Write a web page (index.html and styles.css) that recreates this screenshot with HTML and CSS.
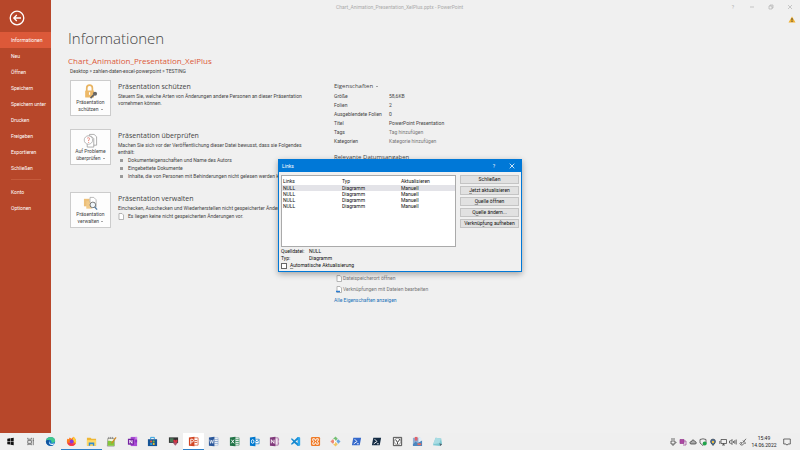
FILE: index.html
```html
<!DOCTYPE html>
<html lang="de">
<head>
<meta charset="utf-8">
<title>Chart_Animation_Presentation_XelPlus.pptx - PowerPoint</title>
<link rel="stylesheet" href="styles.css">
</head>
<body>
<div class="window">
  <nav class="sidebar">
    <button class="back" aria-label="Zurück"><svg viewBox="0 0 16 16"><circle cx="8" cy="8" r="6.8"/><path d="M12 8H5M7.8 5L4.8 8l3 3"/></svg></button>
    <a class="item active" href="#">Informationen</a>
    <a class="item" href="#">Neu</a>
    <a class="item" href="#">Öffnen</a>
    <a class="item" href="#">Speichern</a>
    <a class="item" href="#">Speichern unter</a>
    <a class="item" href="#">Drucken</a>
    <a class="item" href="#">Freigeben</a>
    <a class="item" href="#">Exportieren</a>
    <a class="item" href="#">Schließen</a>
    <hr class="divider">
    <a class="item" href="#">Konto</a>
    <a class="item" href="#">Optionen</a>
  </nav>
  <main class="backstage">
    <header class="titlebar">
      <span class="doc-title">Chart_Animation_Presentation_XelPlus.pptx - PowerPoint</span>
      <div class="window-buttons">
        <button aria-label="Hilfe">?</button>
        <button aria-label="Minimieren"><svg viewBox="0 0 6 6"><path d="M1 3h4"/></svg></button>
        <button aria-label="Verkleinern"><svg viewBox="0 0 6 6"><path d="M1 2h3v3H1zM2 2V1h3v3H4"/></svg></button>
        <button aria-label="Fenster schließen"><svg viewBox="0 0 6 6"><path d="M1 1l4 4M5 1L1 5"/></svg></button>
      </div>
    </header>
    <svg class="warning" viewBox="0 0 8 7"><path d="M4 .5L7.500 6.500H.5z" fill="#f0b030"/><path d="M4 2.200v2.300M4 5v.9" stroke="#333" stroke-width=".9"/></svg>
    <h1>Informationen</h1>
    <h2 class="file-name">Chart_Animation_Presentation_XelPlus</h2>
    <p class="path">Desktop » zahlen-daten-excel-powerpoint » TESTING</p>
    <div class="columns">
      <div class="actions">
        <section class="action">
          <button class="tile"><svg viewBox="0 0 16 16"><path d="M4 8V4.200a3 3 0 0 1 6 0V8" fill="none" stroke="#e8b462" stroke-width="1.800"/><rect x="2.300" y="6.800" width="9.400" height="7.700" rx=".6" fill="#edb968"/><path d="M7 8.800v2.700" stroke="#fff" stroke-width="1.300"/><path d="M8 15l3.500-3.500" stroke="#666" stroke-width="1.800"/><circle cx="12.800" cy="10.400" r="2.200" fill="#666"/></svg><span>Präsentation<br>schützen <i class="caret"></i></span></button>
          <div class="detail"><h3>Präsentation schützen</h3><p>Steuern Sie, welche Arten von Änderungen andere Personen an dieser Präsentation vornehmen können.</p></div>
        </section>
        <section class="action">
          <button class="tile"><svg viewBox="0 0 16 16"><path d="M7 3V1.500h4.800L14.500 4v9h-3M5 3.500h4l2.500 2.500v9H4.500v-4" fill="#fff" stroke="#888" stroke-width=".7"/><circle cx="5.800" cy="7.500" r="4.500" fill="#fff" stroke="#999" stroke-width=".7"/><path d="M4.500 5.500c3-1.500 3 1.500 1.500 2v1M6 9.500v1" fill="none" stroke="#e47c70"/></svg><span>Auf Probleme<br>überprüfen <i class="caret"></i></span></button>
          <div class="detail"><h3>Präsentation überprüfen</h3><p>Machen Sie sich vor der Veröffentlichung dieser Datei bewusst, dass sie Folgendes enthält:</p>
            <ul><li>Dokumenteigenschaften und Name des Autors</li><li>Eingebettete Dokumente</li><li>Inhalte, die von Personen mit Behinderungen nicht gelesen werden können</li></ul></div>
        </section>
        <section class="action">
          <button class="tile"><svg viewBox="0 0 16 16"><path d="M1 3h6v8H1z" fill="#edc07a"/><path d="M3.500 5.500h6v8h-6z" fill="#f1cb8b"/><path d="M7.500 7V1.500h4L14 4v8" fill="#fff" stroke="#999" stroke-width=".7"/><circle cx="10.500" cy="9.500" r="3" fill="#eef5fa" stroke="#666" stroke-width=".9"/><path d="M12.500 11.700l2.500 2.800" stroke="#557ea5" stroke-width="1.500"/></svg><span>Präsentation<br>verwalten <i class="caret"></i></span></button>
          <div class="detail"><h3>Präsentation verwalten</h3><p class="single">Einchecken, Auschecken und Wiederherstellen nicht gespeicherter Änderungen</p>
            <p class="none"><svg class="page" viewBox="0 0 6 7"><path d="M1 .5h3L5.500 2v4.500H1z"/></svg>Es liegen keine nicht gespeicherten Änderungen vor.</p></div>
        </section>
      </div>
      <aside class="properties">
        <h4>Eigenschaften <i class="caret"></i></h4>
        <dl>
          <dt>Größe</dt><dd>58,6KB</dd>
          <dt>Folien</dt><dd>2</dd>
          <dt>Ausgeblendete Folien</dt><dd>0</dd>
          <dt>Titel</dt><dd>PowerPoint Presentation</dd>
          <dt>Tags</dt><dd class="hint">Tag hinzufügen</dd>
          <dt>Kategorien</dt><dd class="hint">Kategorie hinzufügen</dd>
        </dl>
        <h4 class="dates">Relevante Datumsangaben</h4>
        <div class="file-links">
          <a href="#"><svg class="page" viewBox="0 0 6 7"><path d="M1 .5h3L5.500 2v4.500H1z"/></svg>Dateispeicherort öffnen</a>
          <a href="#"><svg class="page" viewBox="0 0 6 7"><path d="M1 .5h3L5.500 2v4.500H1z"/><path d="M0 5.500h4" stroke="#2b7cd3" stroke-width="1.500"/></svg>Verknüpfungen mit Dateien bearbeiten</a>
          <a class="all" href="#">Alle Eigenschaften anzeigen</a>
        </div>
      </aside>
    </div>
  </main>
  <div class="dialog" role="dialog" aria-label="Links">
    <header><span>Links</span><button aria-label="Dialoghilfe">?</button><button aria-label="Dialog schließen"><svg viewBox="0 0 6 6"><path d="M.7.7l4.600 4.600M5.300.7L.7 5.300"/></svg></button></header>
    <div class="dialog-body">
      <div class="list">
        <table>
          <thead><tr><th>Links</th><th>Typ</th><th>Aktualisieren</th></tr></thead>
          <tbody>
            <tr class="selected"><td>NULL</td><td>Diagramm</td><td>Manuell</td></tr>
            <tr><td>NULL</td><td>Diagramm</td><td>Manuell</td></tr>
            <tr><td>NULL</td><td>Diagramm</td><td>Manuell</td></tr>
            <tr><td>NULL</td><td>Diagramm</td><td>Manuell</td></tr>
          </tbody>
        </table>
      </div>
      <div class="commands">
        <button>Schließen</button>
        <button><u>J</u>etzt aktualisieren</button>
        <button><u>Q</u>uelle öffnen</button>
        <button>Q<u>u</u>elle ändern...</button>
        <button>Verknüp<u>f</u>ung aufheben</button>
      </div>
    </div>
    <dl class="source"><dt>Quelldatei:</dt><dd>NULL</dd><dt>Typ:</dt><dd>Diagramm</dd></dl>
    <label class="auto"><input type="checkbox"><span><u>A</u>utomatische Aktualisierung</span></label>
  </div>
</div>
<footer class="taskbar">
  <div class="apps">
    <button aria-label="Start"><svg viewBox="0 0 12 12"><path d="M2.500 3l3-.5v3.200h-3zM6 2.400L9.500 2v3.700H6zM2.500 6.200h3v3.200l-3-.5zM6 6.200h3.500V10L6 9.500z" fill="#111"/></svg></button>
    <button aria-label="Aufgabenansicht"><svg viewBox="0 0 12 12" fill="none" stroke="#555" stroke-width=".8"><path d="M3 2v1.500h4V2M3 5h4v3H3zM3 10V9h4v1M9 2v8M8.500 5h1"/></svg></button>
    <button aria-label="Edge"><svg viewBox="0 0 12 12"><circle cx="6" cy="6" r="5" fill="#1479cc"/><path d="M1 5.500C1.500 0 10.500-.3 11 5c.2 2.500-3.200 3-4.300 2 1-1.700-.4-3-2-3C2.500 4 1.500 5 1 5.500" fill="#42c98d"/><path d="M4.600 5.500c-2 3 1.500 5.500 4.900 4.200C7 12 1.500 10.500 1 6c.8-1.800 3-2 3.600-.5" fill="#16539c"/><path d="M5.300 5.600c-.9 2.200 1.700 4 4.700 2.200l-1 2C5.500 10 3.500 8 5.300 5.600" fill="#eaf7fc"/></svg></button>
    <button class="open" aria-label="Firefox"><svg viewBox="0 0 12 12"><path d="M1.500 3l1.500.5 1-1.800 2 1.300L8 .8c3 2 4 6 2 8.500-2.500 2.800-7 2-8.500-.8-.9-2-.6-4 0-5.500" fill="#ff7b1b"/><path d="M8 .8c3 2 3.800 5.200 2.500 7.200L7 5z" fill="#ffcd36"/><path d="M1.500 7c1 4 7 5.500 9 1-2 1-3 .5-4 0z" fill="#ef315c"/><circle cx="6.200" cy="6" r="2.200" fill="#843bdb"/></svg></button>
    <button class="open" aria-label="Explorer"><svg viewBox="0 0 12 12"><path d="M1 2h4l1 1h5v7.500H1z" fill="#eeb735"/><path d="M1 4.500h10v6H1z" fill="#ffd968"/><path d="M3 7h6v3.500H7.500V9h-3v1.500H3z" fill="#318ccf"/></svg></button>
    <button aria-label="Notepad++"><svg viewBox="0 0 12 12"><path d="M2 2.500h7v8.500H1.500z" fill="#f2f3de" stroke="#777" stroke-width=".7"/><path d="M2 5.500c3-1 4 1.500 7-1v6H2z" fill="#83c63c"/><path d="M3 1v2M5 1v2M7 1v2" stroke="#555" stroke-width=".6"/><path d="M11 1.500L6 8" stroke="#d28a22" stroke-width="1.300"/></svg></button>
    <button aria-label="OneNote"><svg viewBox="0 0 12 12"><path d="M4 1h7v10H4z" fill="#a84bd5"/><path d="M9 1h2v3H9z" fill="#cc84e8"/><path d="M9 4h2v3H9z" fill="#8b2fbd"/><rect x="1" y="3" width="6.500" height="6.500" fill="#7522a2"/><path d="M3 8V4.500L5.500 8V4.500" fill="none" stroke="#fff"/></svg></button>
    <button aria-label="Microsoft Store"><svg viewBox="0 0 12 12"><path d="M1 3.500h10V11H1z" fill="#155396"/><path d="M4 3.500V1.500h4v2" fill="none" stroke="#239de0"/><path d="M3.500 5h2v2h-2z" fill="#f15b37"/><path d="M6.300 5h2v2h-2z" fill="#80bc32"/><path d="M3.500 7.700h2v2h-2z" fill="#28a6e8"/><path d="M6.300 7.700h2v2h-2z" fill="#fbc42a"/></svg></button>
    <button aria-label="Monitor"><svg viewBox="0 0 12 12"><path d="M1 1.500h10v6H1z" fill="#333"/><path d="M2 2.500h4v4H2z" fill="#4a7958"/><path d="M6 6c-1.200-2.500 2-2.500 2-.6 0-2 3-1.700 2.500.6L8 9z" fill="#d73243"/><path d="M5 7l3 3.500 2.500-3" fill="#a95a72"/></svg></button>
    <button class="open current" aria-label="PowerPoint"><svg viewBox="0 0 12 12"><path d="M6 2h5v8H6z" fill="#fff" stroke="#d35230" stroke-width=".8"/><path d="M7 5h3M7 7h3" stroke="#d35230"/><path d="M1 1.500L7 .7v10.600l-6-.8z" fill="#d24625"/><path d="M3 9V3.500h1.500c2 0 2 3 0 3H3" fill="none" stroke="#fff"/></svg></button>
    <button aria-label="Word"><svg viewBox="0 0 12 12"><path d="M6 2h5v8H6z" fill="#fff" stroke="#8aa6cf" stroke-width=".6"/><path d="M7 4h4M7 6h4M7 8h4" stroke="#8aa6cf"/><path d="M1 1.500L7 .7v10.600l-6-.8z" fill="#2b579a"/><path d="M2 4l.8 4L4 4.500 5.200 8 6 4" fill="none" stroke="#fff" stroke-width=".8"/></svg></button>
    <button aria-label="Excel"><svg viewBox="0 0 12 12"><path d="M6 2h5v8H6z" fill="#fff" stroke="#217346" stroke-width=".6"/><path d="M7 4h4M7 6h4M7 8h4" stroke="#4e9b6e"/><path d="M1 1.500L7 .7v10.600l-6-.8z" fill="#217346"/><path d="M2.500 4l3 4M5.500 4l-3 4" stroke="#fff"/></svg></button>
    <button aria-label="Outlook"><svg viewBox="0 0 12 12"><path d="M6 3.500h5v5H6z" fill="#fff" stroke="#0072c6" stroke-width=".7"/><path d="M6 4l2.500 2.500L11 4" fill="none" stroke="#0072c6" stroke-width=".8"/><path d="M1 1.500L7 .7v10.600l-6-.8z" fill="#0078ce"/><ellipse cx="4" cy="6" rx="1.400" ry="2" fill="none" stroke="#fff"/></svg></button>
    <button aria-label="OneNote 2016"><svg viewBox="0 0 12 12"><path d="M6 2h4v8H6z" fill="#f4e6f2" stroke="#80397b" stroke-width=".6"/><path d="M10 3h1v2h-1zM10 7h1v2h-1z" fill="#b175ad"/><path d="M1 1.500L7 .7v10.600l-6-.8z" fill="#80397b"/><path d="M2.500 8V4l3 4V4" fill="none" stroke="#fff"/></svg></button>
    <button aria-label="Visual Studio Code"><svg viewBox="0 0 12 12"><path d="M8.500 1L11 2v8l-2.500 1L4.700 7.500 2 9.500 1 8.800 3.500 6 1 3.200 2 2.500l2.700 2zM8.500 4L6 6l2.500 2z" fill="#1689d0" fill-rule="evenodd"/><path d="M8.500 1L11 2v8l-2.500 1z" fill="#29a6ee"/></svg></button>
    <button aria-label="XAMPP"><svg viewBox="0 0 12 12"><rect x="1" y="1" width="10" height="10" rx="1.500" fill="#ef7b28"/><path d="M3 3h2l1 2 1-2h2v2L7.500 6 9 7v2H7L6 7 5 9H3V7l1.500-1L3 5z" fill="none" stroke="#fff"/></svg></button>
    <button aria-label="Git"><svg viewBox="0 0 12 12"><path d="M6 .5L8.500 3 6 5.500 3.500 3z" fill="#74bf74"/><path d="M3 3.500L5.500 6 3 8.500.5 6z" fill="#ed8675"/><path d="M9 3.500L11.500 6 9 8.500 6.500 6z" fill="#68a7dd"/><path d="M6 6.500L8.500 9 6 11.500 3.500 9z" fill="#f0c663"/><path d="M5 3.500v5M5 5l3 2" stroke="#fff"/></svg></button>
    <button aria-label="PowerShell"><svg viewBox="0 0 12 12"><path d="M2.500 2H11L9.500 10H1z" fill="#3468cb"/><path d="M4 3.500L6.500 6l-3.500 2.500M6.500 8.500h2" fill="none" stroke="#fff"/></svg></button>
    <button aria-label="PowerShell 7"><svg viewBox="0 0 12 12"><path d="M2.500 2H11L9.500 10H1z" fill="#152c44"/><path d="M4 3.500L6.500 6l-3.500 2.500M6.500 8.500h2" fill="none" stroke="#fff"/></svg></button>
    <button aria-label="Uhr"><svg viewBox="0 0 12 12"><path d="M1.500 1.500h9v9h-9z" fill="#eee" stroke="#444"/><circle cx="6" cy="6" r="3.500" fill="#fff" stroke="#777" stroke-width=".7"/><path d="M4 4l2 3 3-4M6 7v2" fill="none" stroke="#333"/></svg></button>
    <button aria-label="Diagramm"><svg viewBox="0 0 12 12"><path d="M1 2h8v8H1z" fill="#8dafd4"/><path d="M3 1h3v4H3z" fill="#df616a"/><path d="M7 2h3v5H7z" fill="#e0eefa"/><path d="M1 9l3-3 2 2 5-3v6H1z" fill="#4c87bf"/><path d="M6 8h4v2H6z" fill="#e96a5c"/></svg></button>
    <button aria-label="Editor"><svg viewBox="0 0 12 12"><path d="M4 2l6 .8 1 6.200-2 2-8-1z" fill="#7dc8d2"/><path d="M4 2l6 .8L8 8 1 9z" fill="#a9dce3"/><path d="M8 8l3 1-2 2z" fill="#55606a"/></svg></button>
  </div>
  <div class="tray">
    <svg viewBox="0 0 8 8"><path d="M2 1h4M2 3h4v3H2zM4 6v2M6.500 4.500h1"/></svg>
    <svg viewBox="0 0 8 8"><path d="M1 1.500h4v4H1z" fill="#ad47a4" stroke="#963c8f"/><path d="M5 3h2v4H4" stroke="#963c8f"/></svg>
    <svg viewBox="0 0 8 8"><path d="M2 6h4c2 0 1.500-2.500 0-2.300C5 1 2.500 2 2.500 3.500.5 3.300.5 6 2 6" fill="#aaa"/></svg>
    <svg viewBox="0 0 8 8"><path d="M1 1.500L4 .8l3 .7v3L4 7.500 1 5z"/><circle cx="5.700" cy="5.500" r="2" fill="#1fa34a" stroke="none"/></svg>
    <svg viewBox="0 0 8 8"><circle cx="4" cy="3.500" r="2.500" fill="#4a6f9c" stroke-width=".5"/><path d="M2.500 5.500L4 7.500l1.500-2" fill="#397fbd"/><circle cx="4" cy="4" r="1.200" fill="#f1c040" stroke="none"/></svg>
    <svg viewBox="0 0 8 8"><path d="M2 1.500h5.500v4H2zM.8 3v3M3 7h3M4.500 5.500V7"/></svg>
    <svg viewBox="0 0 8 8"><path d="M.5 3h1L3 1.500v5L1.500 5h-1zM4.500 3v2M5.800 2.200v3.600M7.200 1.500v5"/></svg>
    <svg viewBox="0 0 8 8"><path d="M7 .8L3.500 5M.5 5.500c2-2 3-.5 1.500.5s1 1.500 2 .5 2-2 3-1M4 2.500l2 2"/></svg>
    <time class="clock" datetime="2022-06-14T15:49">15:49<br>14.06.2022</time>
    <svg class="notice" viewBox="0 0 8 8"><path d="M.7 1h6.600v5H5L4 7.200 3 6H.7z"/></svg>
  </div>
</footer>
</body>
</html>
```
FILE: styles.css
```css
* { box-sizing: border-box; }
body {
  margin: 0;
  min-height: 100vh;
  display: flex;
  flex-direction: column;
  background: #f0f0f0;
  color: #444;
  font: 5px/7px Roboto, "Open Sans", sans-serif;
}
h1, h2, h3, h4, p, ul, dl, dd { margin: 0; padding: 0; }
h1, h2, h3, h4 { font-family: "Open Sans", sans-serif; font-weight: 400; }
button { margin: 0; padding: 0; border: 0; background: none; color: inherit; font: inherit; }
a { color: inherit; text-decoration: none; }
u { text-decoration-color: #999; }
svg { display: block; }
.window { position: relative; flex: 1; display: flex; }

.sidebar { width: 51px; flex: none; background: #b7472a; color: #fff; display: flex; flex-direction: column; }
.back { margin: 10px 0 6px 9px; width: 16px; height: 16px; }
.back svg { fill: none; stroke: #fff; stroke-width: 1.3; }
.item { padding-left: 11px; line-height: 16px; white-space: nowrap; }
.active { background: #dc5939; }
.divider { width: 30px; height: 1px; margin: 3px 0 4px 11px; border: 0; background: #c65b3c; }

.backstage { flex: 1; min-width: 0; padding-left: 17px; display: flex; flex-direction: column; }
.titlebar { display: flex; height: 14px; align-items: center; color: #aaa; }
.doc-title { flex: 1; padding-left: 268px; }
.window-buttons { display: flex; gap: 13px; padding-right: 7px; }
.window-buttons svg { width: 6px; height: 6px; fill: none; stroke: #aaa; stroke-width: .6; }
.window-buttons button { width: 6px; }
.warning { align-self: flex-end; width: 8px; height: 7px; margin: 2px 4px 0 0; }
h1 { margin-top: 4px; font-size: 15px; line-height: 22px; font-weight: 300; }
.file-name { margin-top: 6px; color: #dc5939; font-size: 8px; line-height: 12px; }
.path { padding-left: 2px; line-height: 9px; }
.columns { display: grid; grid-template-columns: 266px 1fr; margin-top: 4px; }
.actions { display: flex; flex-direction: column; gap: 12px; padding-left: 2px; }
.action { display: flex; gap: 7px; min-height: 37px; }
.tile { width: 41px; height: 36px; flex: none; align-self: flex-start; display: flex; flex-direction: column; align-items: center; justify-content: center; background: #fdfdfd; border: 1px solid #ccc; }
.tile svg { width: 15px; height: 15px; }
.caret { display: inline-block; margin-left: 1px; border: 1px solid transparent; border-top-color: #555; border-bottom: 0; vertical-align: middle; }
.detail { flex: 1; min-width: 0; }
h3 { font-size: 7px; line-height: 13px; }
.detail p { padding-right: 30px; }
ul { list-style: none; }
li { display: flex; align-items: center; gap: 5px; padding-left: 2px; line-height: 8px; white-space: nowrap; }
li::before { content: ""; width: 3px; height: 3px; background: #999; }
.detail .single { padding: 0; white-space: nowrap; }
.detail .none { display: flex; gap: 4px; margin-top: 1px; padding: 0; }
.page { width: 6px; height: 7px; fill: #fff; stroke: #999; stroke-width: .7; }
h4 { font-size: 6px; line-height: 12px; }
.properties dl { display: grid; grid-template-columns: 55px 1fr; line-height: 9px; }
.hint { color: #777; }
.dates { margin-top: 5px; }
.file-links { display: flex; flex-direction: column; gap: 4px; margin-top: 112px; color: #777; }
.file-links a { display: flex; gap: 1px; padding-left: 2px; }
.file-links .all { padding: 0; color: #2072b8; }

.dialog { position: absolute; left: 278px; top: 159px; width: 244px; padding-bottom: 2px; background: #f0f0f0; border: 1px solid #0078d7; color: #111; box-shadow: 0 2px 6px #0005; }
.dialog header { display: flex; align-items: center; height: 12px; padding: 0 6px 0 3px; gap: 14px; background: #0078d7; color: #fff; }
.dialog header span { flex: 1; }
.dialog header svg { width: 6px; height: 6px; stroke: #fff; stroke-width: .8; }
.dialog-body { display: grid; grid-template-columns: 1fr 59px; gap: 4px; padding: 3px 2px 0; }
.list { height: 72px; background: #fff; border: 1px solid #aaa; }
table { width: 100%; table-layout: fixed; border-collapse: collapse; line-height: 6px; }
th { width: 59px; height: 9px; padding: 0 1px; text-align: left; font-weight: 400; }
th:last-child { width: auto; }
td { padding: 0 1px; }
.selected { background: #e3e3e8; }
.commands { display: flex; flex-direction: column; gap: 2px; }
.commands button { height: 9px; background: #e1e1e1; border: 1px solid #c4c4c4; line-height: 7px; white-space: nowrap; }
.source { display: grid; grid-template-columns: 28px 1fr; padding: 1px 2px 0; }
.auto { display: flex; align-items: center; gap: 3px; padding-left: 2px; }
.auto input { appearance: none; width: 6px; height: 6px; margin: 0; background: #fff; border: 1px solid #666; }

.taskbar { flex: none; display: flex; justify-content: space-between; height: 17px; background: #efefef; color: #222; }
.apps { width: 56%; display: grid; grid-template-columns: repeat(22, 1fr); }
.apps button { display: grid; place-items: center; border-bottom: 1px solid transparent; }
.apps svg { width: 11px; height: 11px; }
.apps .open { border-bottom-color: #2f80c8; }
.apps .current { background: #fff; }
.tray { display: flex; align-items: center; gap: 2px; padding-right: 9px; }
.tray svg { width: 8px; height: 8px; fill: none; stroke: #333; stroke-width: .7; }
.clock { width: 30px; text-align: center; }
.tray .notice { margin-left: 2px; }
```
